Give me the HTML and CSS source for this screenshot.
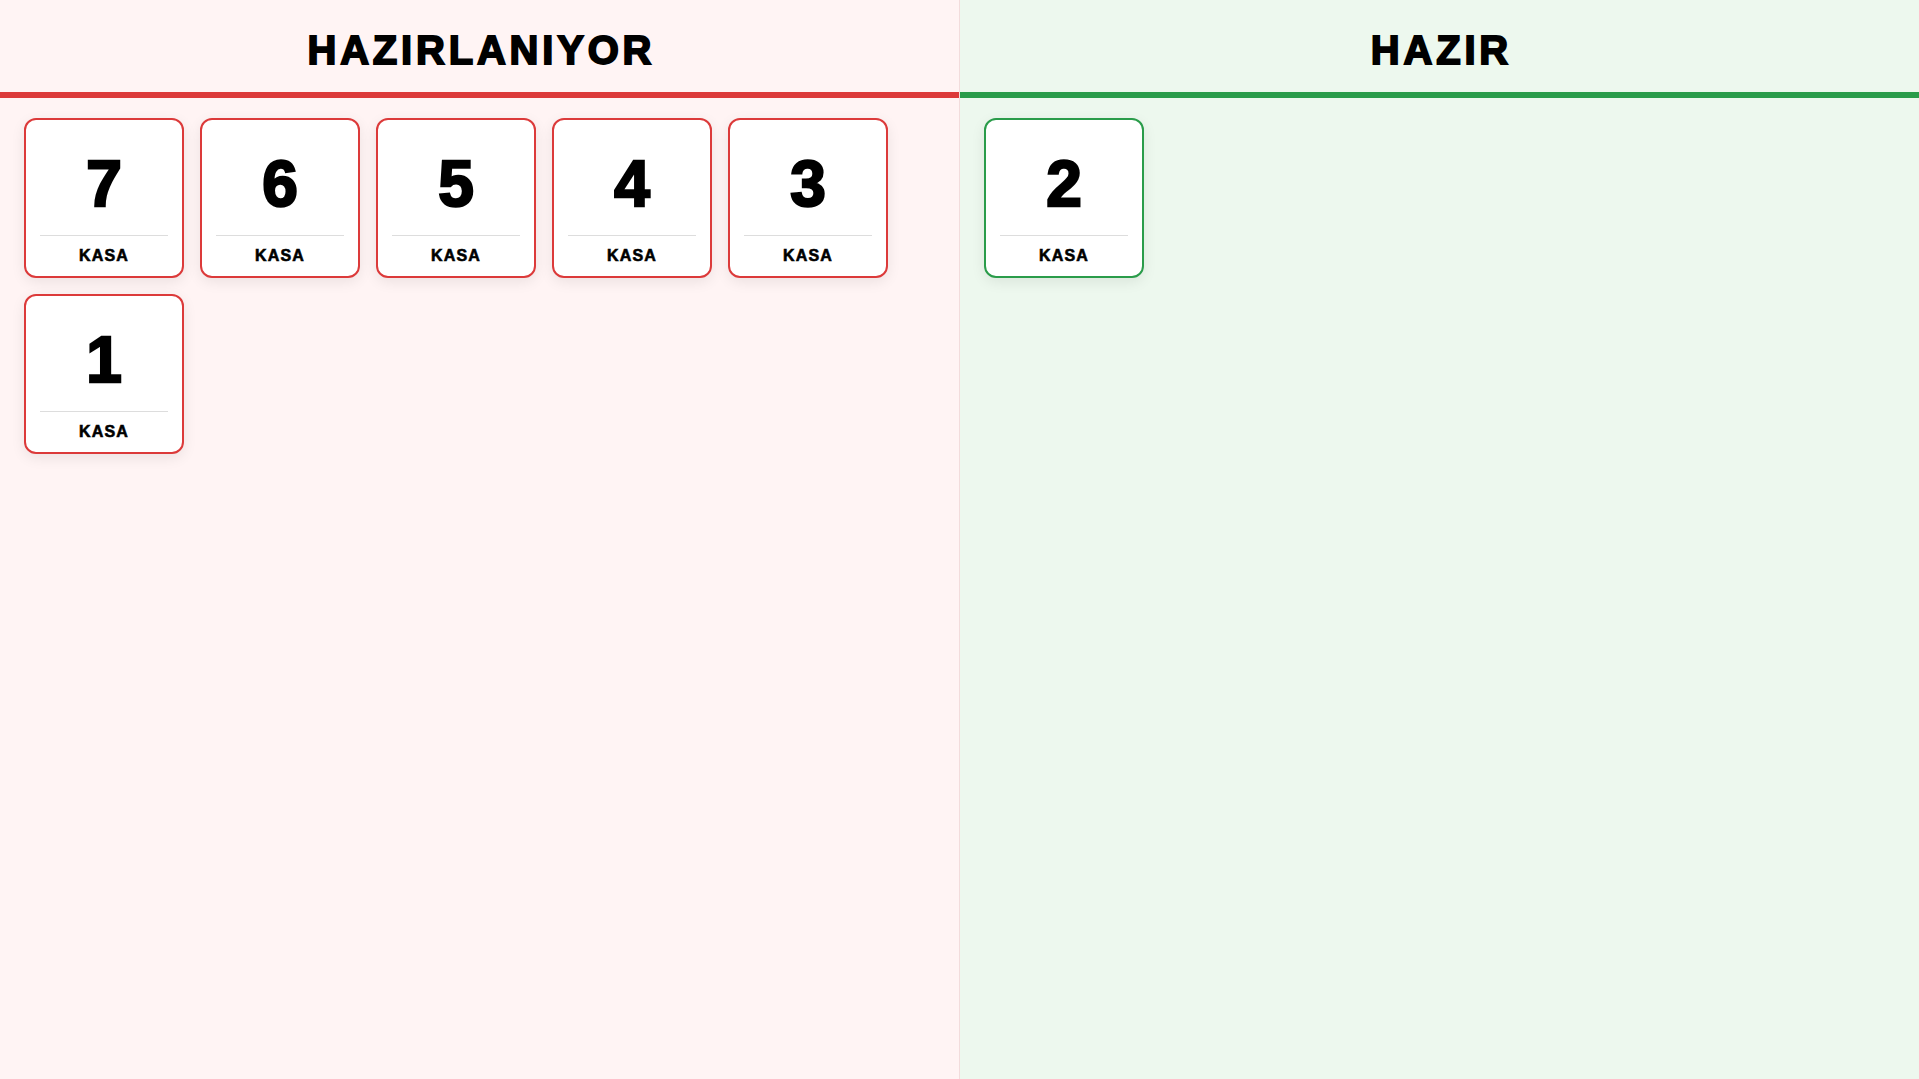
FILE: index.html
```html
<!DOCTYPE html>
<html lang="tr">
<head>
    <meta charset="UTF-8">
    <meta name="viewport" content="width=device-width, initial-scale=1.0">
    <title>Sipariş Ekranı</title>
    <link rel="stylesheet" href="styles.css">
</head>
<body>
    <div class="board">
        <div class="column preparing">
            <div class="column-title">HAZIRLANIYOR</div>
            <div class="orders">
                <div class="order"><div class="order-no">7</div><div class="order-src">KASA</div></div>
                <div class="order"><div class="order-no">6</div><div class="order-src">KASA</div></div>
                <div class="order"><div class="order-no">5</div><div class="order-src">KASA</div></div>
                <div class="order"><div class="order-no">4</div><div class="order-src">KASA</div></div>
                <div class="order"><div class="order-no">3</div><div class="order-src">KASA</div></div>
                <div class="order"><div class="order-no">1</div><div class="order-src">KASA</div></div>
            </div>
        </div>
        <div class="column ready">
            <div class="column-title">HAZIR</div>
            <div class="orders">
                <div class="order"><div class="order-no">2</div><div class="order-src">KASA</div></div>
            </div>
        </div>
    </div>
</body>
</html>
```

FILE: styles.css
```css
:root {
    --red: #dc3a3a;
    --green: #2a9c4a;
    --red-bg: #fff4f4;
    --green-bg: #edf8ee;
}
html, body {
    height: 100%;
}
body {
    margin: 0;
    font-family: 'Liberation Sans', Arial, sans-serif;
    color: #000;
}
.board {
    display: flex;
    height: 100%;
}
.column {
    flex: 1;
    display: flex;
    flex-direction: column;
}
.preparing {
    background: var(--red-bg);
    border-right: 1px solid #f2dcdc;
}
.ready {
    background: var(--green-bg);
}
.column-title {
    height: 98px;
    display: flex;
    align-items: center;
    justify-content: center;
    font-size: 40px;
    font-weight: bold;
    letter-spacing: 3.8px;
    text-indent: 3.8px;
    -webkit-text-stroke: 1.8px #000;
    padding-top: 8px;
    box-sizing: border-box;
}
.preparing .column-title {
    border-bottom: 6px solid var(--red);
}
.ready .column-title {
    border-bottom: 6px solid var(--green);
}
.orders {
    display: flex;
    flex-wrap: wrap;
    align-content: flex-start;
    gap: 16px;
    padding: 20px 24px;
}
.order {
    width: 160px;
    height: 160px;
    box-sizing: border-box;
    background: #fff;
    border: 2px solid var(--red);
    border-radius: 12px;
    box-shadow: 0 4px 14px rgba(0, 0, 0, 0.08);
    display: flex;
    flex-direction: column;
}
.ready .order {
    border-color: var(--green);
}
.order-no {
    flex: 1;
    display: flex;
    align-items: center;
    justify-content: center;
    font-size: 64px;
    font-weight: bold;
    -webkit-text-stroke: 2.4px #000;
    padding-top: 13px;
}
.order-src {
    margin: 0 14px;
    border-top: 1px solid #dddddd;
    height: 40px;
    display: flex;
    align-items: center;
    justify-content: center;
    font-size: 16px;
    font-weight: bold;
    letter-spacing: 1.2px;
    -webkit-text-stroke: 0.6px #000;
}
```
